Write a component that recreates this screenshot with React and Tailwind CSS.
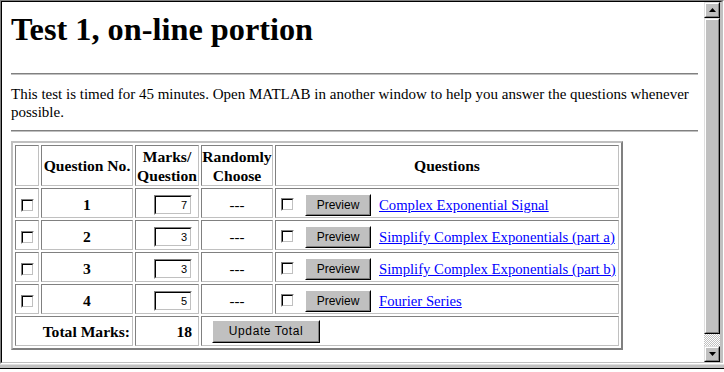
import React from 'react'

const rows = [
  { no: 1, marks: 7, title: 'Complex Exponential Signal' },
  { no: 2, marks: 3, title: 'Simplify Complex Exponentials (part a)' },
  { no: 3, marks: 3, title: 'Simplify Complex Exponentials (part b)' },
  { no: 4, marks: 5, title: 'Fourier Series' },
]

const cell = 'p-0 border border-t-[#808080] border-l-[#808080] border-r-[#c0c0c0] border-b-[#c0c0c0] align-middle'

function CheckBox() {
  return (
    <span className="inline-block w-[13px] h-[13px] border border-t-[#808080] border-l-[#808080] border-r-white border-b-white">
      <span className="block w-full h-full border border-t-black border-l-black border-r-[#c0c0c0] border-b-[#c0c0c0] bg-white" />
    </span>
  )
}

function WinButton({ children, className }) {
  return (
    <span className={`inline-block border border-t-white border-l-white border-r-black border-b-black bg-[#c0c0c0] ${className}`}>
      <span className="flex items-center justify-center w-full h-full border border-t-[#c0c0c0] border-l-[#c0c0c0] border-r-[#808080] border-b-[#808080] font-['Liberation_Sans',sans-serif] text-[12px] text-black">
        {children}
      </span>
    </span>
  )
}

function MarkInput({ value }) {
  return (
    <span className="inline-block w-[38px] h-[20px] border border-t-[#808080] border-l-[#808080] border-r-white border-b-white">
      <span className="flex items-center justify-end w-full h-full pr-[3px] border border-t-black border-l-black border-r-[#c0c0c0] border-b-[#c0c0c0] bg-white font-['Liberation_Sans',sans-serif] text-[11px]">
        {value}
      </span>
    </span>
  )
}

function ScrollButton({ down }) {
  return (
    <div className="h-[16px] border border-t-[#dfdfdf] border-l-[#dfdfdf] border-r-black border-b-black bg-[#c0c0c0]">
      <div className="flex items-center justify-center h-full border border-t-white border-l-white border-r-[#808080] border-b-[#808080]">
        <svg width="7" height="4" viewBox="0 0 7 4">
          {down ? <polygon points="0,0 7,0 3.5,4" fill="#000" /> : <polygon points="3.5,0 7,4 0,4" fill="#000" />}
        </svg>
      </div>
    </div>
  )
}

export default function App() {
  return (
    <div className="w-[724px] h-[372px] overflow-hidden bg-[#c0c0c0] font-['Liberation_Serif',serif] text-black">
      <div className="h-[364px] border border-t-[#808080] border-l-[#808080] border-r-white border-b-white">
        <div className="flex h-full border border-t-black border-l-black border-r-[3px] border-r-[#c0c0c0] border-b-[#c0c0c0]">
          <div className="w-[702px] bg-white pl-[9px] pr-[6px] pt-[11px]">
            <h1 className="text-[32.3px] leading-[32px] font-bold">Test 1, on-line portion</h1>
            <hr className="mt-[28px] h-[2px] border-0 border-t border-b border-t-[#808080] border-b-[#c0c0c0]" />
            <p className="mt-[10px] text-[15px] leading-[18px]">
              This test is timed for 45 minutes. Open MATLAB in another window to help you answer the questions whenever possible.
            </p>
            <hr className="mt-[9px] h-[2px] border-0 border-t border-b border-t-[#808080] border-b-[#c0c0c0]" />

            <table className="mt-[9px] w-[612px] table-fixed border-separate border-spacing-[2px] border-2 border-t-[#c0c0c0] border-l-[#c0c0c0] border-r-[#808080] border-b-[#808080]">
              <colgroup>
                <col className="w-[24px]" />
                <col className="w-[92px]" />
                <col className="w-[64px]" />
                <col className="w-[72px]" />
                <col className="w-[344px]" />
              </colgroup>
              <thead>
                <tr className="h-[41px] text-[15.6px] leading-[19px] font-bold">
                  <th className={cell}></th>
                  <th className={cell}>Question No.</th>
                  <th className={cell}>Marks/<br />Question</th>
                  <th className={cell}>Randomly<br />Choose</th>
                  <th className={cell}>Questions</th>
                </tr>
              </thead>
              <tbody>
                {rows.map(r => (
                  <tr key={r.no} className="h-[30px]">
                    <td className={`${cell} pt-[4px]`}>
                      <div className="flex justify-center"><CheckBox /></div>
                    </td>
                    <td className={`${cell} pt-[4px] text-center text-[15.6px] font-bold`}>{r.no}</td>
                    <td className={`${cell} pt-[4px]`}>
                      <div className="flex justify-end pr-[6px]"><MarkInput value={r.marks} /></div>
                    </td>
                    <td className={`${cell} pt-[4px] text-center text-[15px]`}>---</td>
                    <td className={`${cell} pt-[4px]`}>
                      <div className="flex items-center pl-[5px]">
                        <CheckBox />
                        <WinButton className="ml-[11px] w-[66px] h-[22px]">Preview</WinButton>
                        <a href="#" className="ml-[8px] text-[14.7px] text-[#0000ff] underline">{r.title}</a>
                      </div>
                    </td>
                  </tr>
                ))}
                <tr className="h-[30px] text-[15.6px] font-bold">
                  <td colSpan={2} className={`${cell} pt-[1px] text-right pr-[2px]`}>Total Marks:</td>
                  <td className={`${cell} pt-[1px] text-right pr-[6px]`}>18</td>
                  <td colSpan={2} className={cell}>
                    <div className="flex pl-[10px]">
                      <WinButton className="w-[108px] h-[23px] font-normal tracking-[0.6px]">Update Total</WinButton>
                    </div>
                  </td>
                </tr>
              </tbody>
            </table>
          </div>

          <div className="w-[16px] flex flex-col">
            <ScrollButton />
            <div className="h-[316px] border border-t-[#dfdfdf] border-l-[#dfdfdf] border-r-black border-b-black bg-[#c0c0c0]">
              <div className="h-full border border-t-white border-l-white border-r-[#808080] border-b-[#808080]" />
            </div>
            <div className="flex-1 bg-[repeating-conic-gradient(#c0c0c0_0_25%,#ffffff_0_50%)] bg-[length:2px_2px]" />
            <ScrollButton down />
          </div>
        </div>
      </div>
      <div className="h-[8px] border-t border-t-[#dfdfdf] border-b-[3px] border-b-white">
        <div className="h-[3px]" />
        <div className="h-[1px] bg-black" />
      </div>
    </div>
  )
}
